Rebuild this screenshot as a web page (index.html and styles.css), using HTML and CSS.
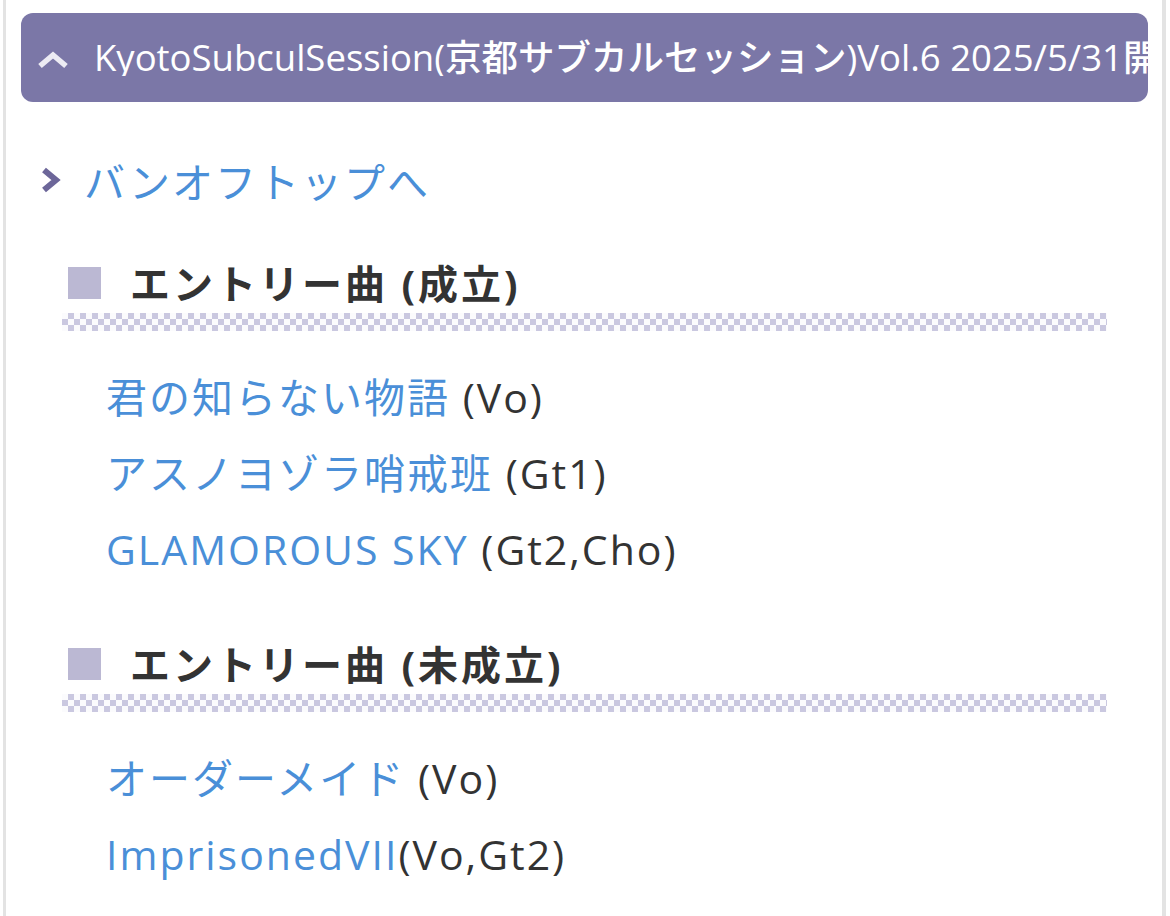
FILE: index.html
```html
<!DOCTYPE html>
<html lang="ja">
<head>
<meta charset="utf-8">
<title>KyotoSubculSession Vol.6</title>
<link rel="stylesheet" href="styles.css">
</head>
<body>
<div class="page">
  <div class="header">
    <svg class="icon-up" width="32" height="18" viewBox="0 0 32 18" aria-hidden="true">
      <polyline points="3,15 16,4 29,15" fill="none" stroke="#ecebf3" stroke-width="5.5" stroke-linejoin="miter"/>
    </svg>
    <span class="header-title">KyotoSubculSession(京都サブカルセッション)Vol.6 2025/5/31開催</span>
  </div>

  <div class="backlink">
    <svg class="icon-right" width="20" height="26" viewBox="0 0 20 26" aria-hidden="true">
      <polyline points="3,3 15,13 3,23" fill="none" stroke="#6c6699" stroke-width="6" stroke-linejoin="miter"/>
    </svg>
    <a class="link" href="#">バンオフトップへ</a>
  </div>

  <section class="section">
    <h2 class="sec-title"><span class="sq"></span>エントリー曲 (成立)</h2>
    <div class="checker"></div>
    <ul class="songs">
      <li><a class="link" href="#">君の知らない物語</a> (Vo)</li>
      <li><a class="link" href="#">アスノヨゾラ哨戒班</a> (Gt1)</li>
      <li><a class="link" href="#">GLAMOROUS SKY</a> (Gt2,Cho)</li>
    </ul>
  </section>

  <section class="section">
    <h2 class="sec-title"><span class="sq"></span>エントリー曲 (未成立)</h2>
    <div class="checker"></div>
    <ul class="songs">
      <li><a class="link" href="#">オーダーメイド</a> (Vo)</li>
      <li><a class="link" href="#">ImprisonedVII</a>(Vo,Gt2)</li>
    </ul>
  </section>
</div>
</body>
</html>
```

FILE: styles.css
```css
html, body {
  margin: 0;
  padding: 0;
  background: #ffffff;
}

body {
  font-family: "Open Sans", "Noto Sans CJK JP", sans-serif;
  color: #333333;
}

.page {
  margin: 0 4px 0 3px;
  border-left: 3px solid #e3e3e3;
  border-right: 4px solid #e3e3e3;
  min-height: 916px;
  box-sizing: border-box;
  padding: 13px 14px 0 15px;
}

.header {
  height: 89px;
  border-radius: 12px;
  background: #7b77a7;
  display: flex;
  align-items: center;
  padding-left: 16px;
  overflow: hidden;
  white-space: nowrap;
}

.icon-up {
  flex: none;
  margin-right: 25px;
  margin-top: 4px;
}

.header-title {
  color: #ffffff;
  font-size: 36.5px;
  font-weight: 500;
  line-height: 1;
  overflow: hidden;
}

.backlink {
  margin-top: 40px;
  display: flex;
  align-items: center;
  height: 76px;
  padding-left: 20px;
}

.icon-right {
  flex: none;
  margin-right: 23px;
}

.link {
  color: #4a8fd8;
  text-decoration: none;
  font-weight: 400;
}

.backlink .link,
.songs li {
  font-size: 41px;
  letter-spacing: 2px;
}

.section {
  margin: 42px 41px 0 41px;
}

.section + .section {
  margin-top: 54px;
}

.sec-title {
  margin: 0;
  height: 50px;
  box-sizing: border-box;
  padding: 0 0 6px 6px;
  display: flex;
  align-items: center;
  font-size: 40px;
  font-weight: 700;
  letter-spacing: 3px;
  color: #333333;
}

.sq {
  width: 33px;
  height: 32px;
  background: #bbb8d3;
  margin-right: 29px;
  flex: none;
  margin-top: 2px;
}

.checker {
  margin-top: 3px;
  height: 18px;
  background-image: repeating-conic-gradient(#cac8e0 0 25%, #fbfbfd 0 50%);
  background-size: 12px 12px;
}

.songs {
  list-style: none;
  margin: 28px 0 0 0;
  padding: 0 0 0 44px;
}

.songs li {
  height: 76px;
  line-height: 76px;
  white-space: nowrap;
  color: #333333;
}
```
